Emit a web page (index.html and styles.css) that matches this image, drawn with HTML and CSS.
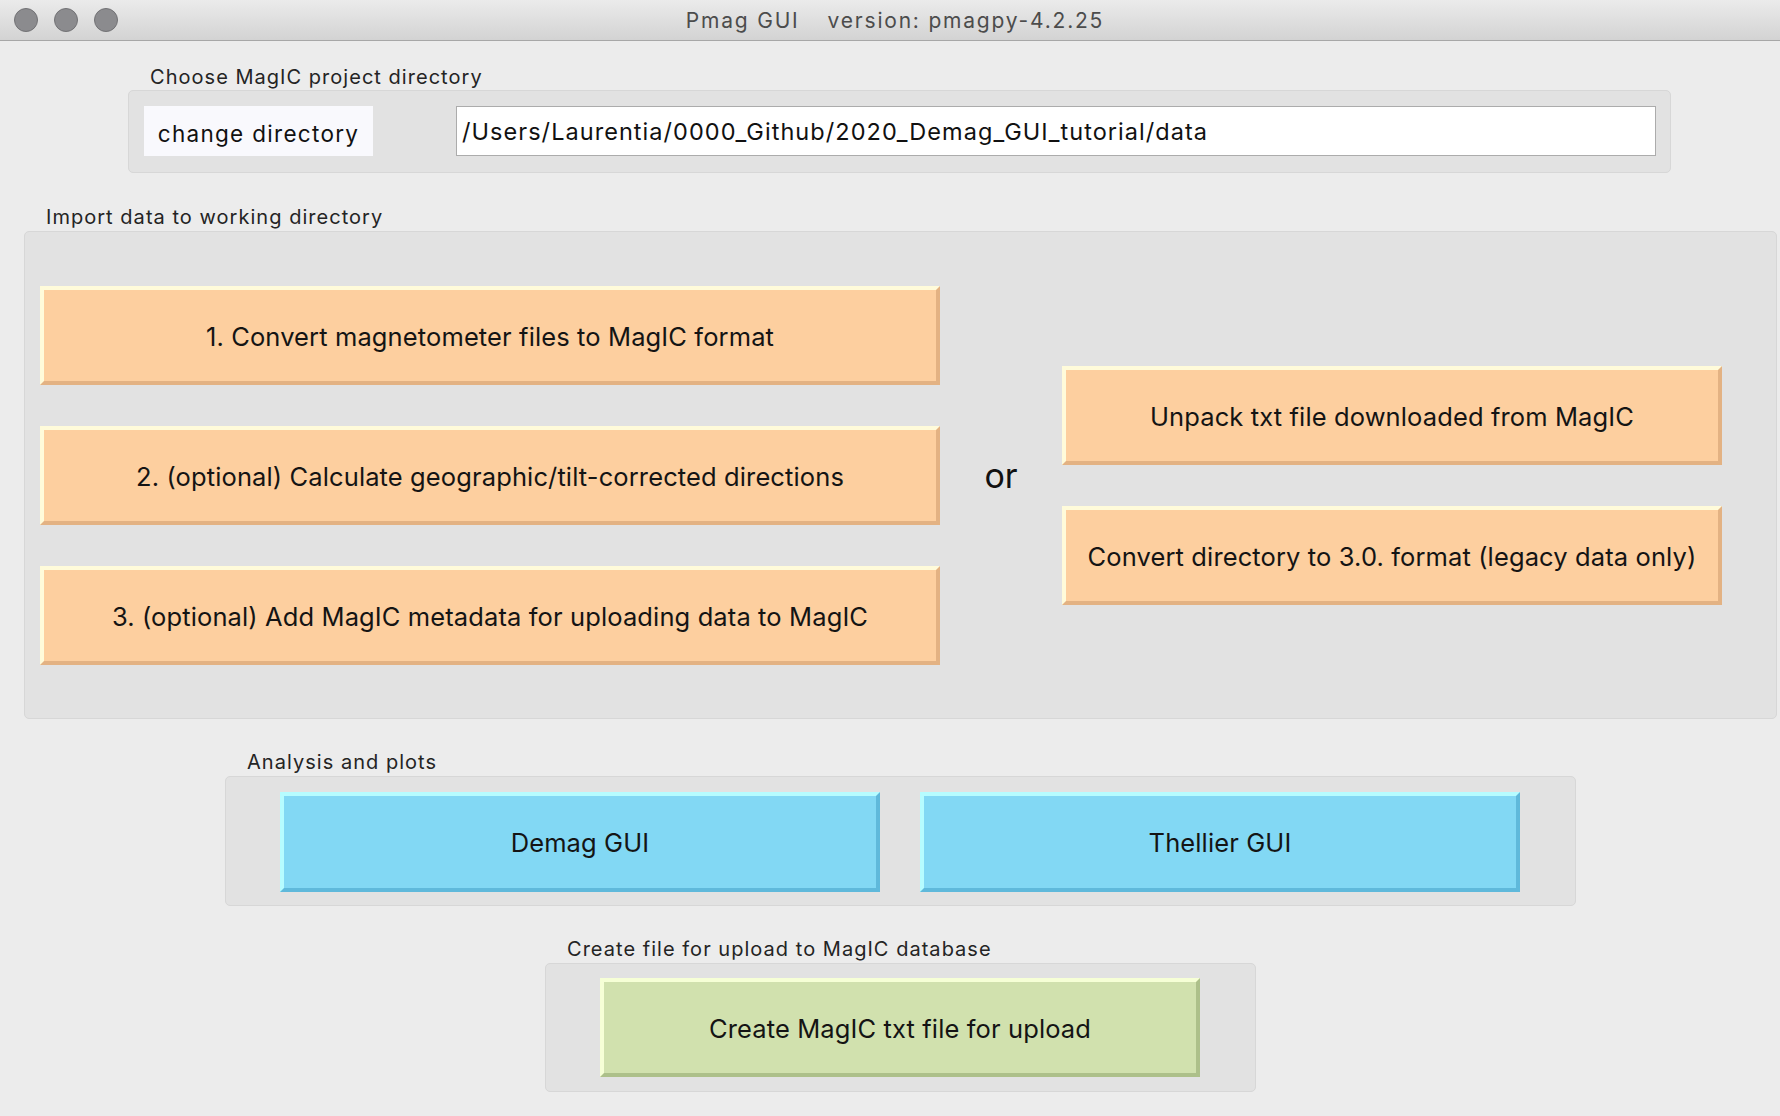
FILE: index.html
```html
<!DOCTYPE html>
<html>
<head>
<meta charset="utf-8">
<title>Pmag GUI</title>
<link rel="stylesheet" href="styles.css">
</head>
<body>
<div class="window">
  <div class="titlebar">
    <div class="lights">
      <span class="light"></span><span class="light"></span><span class="light"></span>
    </div>
    <div class="title">Pmag GUI<span class="ver">version: pmagpy-4.2.25</span></div>
    <div></div>
  </div>

  <section class="group g-dir">
    <div class="label">Choose MagIC project directory</div>
    <div class="box box-dir">
      <div class="btn-plain">change directory</div>
      <div class="path">/Users/Laurentia/0000_Github/2020_Demag_GUI_tutorial/data</div>
    </div>
  </section>

  <section class="group g-import">
    <div class="label">Import data to working directory</div>
    <div class="box box-import">
      <div class="col col-left">
        <div class="btn orange">1. Convert magnetometer files to MagIC format</div>
        <div class="btn orange">2. (optional) Calculate geographic/tilt-corrected directions</div>
        <div class="btn orange">3. (optional) Add MagIC metadata for uploading data to MagIC</div>
      </div>
      <div class="or">or</div>
      <div class="col col-right">
        <div class="btn orange">Unpack txt file downloaded from MagIC</div>
        <div class="btn orange">Convert directory to 3.0. format (legacy data only)</div>
      </div>
    </div>
  </section>

  <section class="group g-analysis">
    <div class="label">Analysis and plots</div>
    <div class="box box-analysis">
      <div class="btn blue">Demag GUI</div>
      <div class="btn blue">Thellier GUI</div>
    </div>
  </section>

  <section class="group g-upload">
    <div class="label">Create file for upload to MagIC database</div>
    <div class="box box-upload">
      <div class="btn green">Create MagIC txt file for upload</div>
    </div>
  </section>
</div>
</body>
</html>
```

FILE: styles.css
```css
* { box-sizing: border-box; }

html, body {
  margin: 0;
  padding: 0;
}

body {
  width: 1780px;
  height: 1116px;
  overflow: hidden;
  background: #ececec;
  font-family: "Inter", "Liberation Sans", sans-serif;
  color: #1a1a1a;
}

.window {
  display: flex;
  flex-direction: column;
  align-items: flex-start;
  width: 1780px;
  height: 1116px;
}

/* ---------- title bar ---------- */
.titlebar {
  width: 100%;
  height: 41px;
  flex: none;
  display: grid;
  grid-template-columns: 1fr auto 1fr;
  align-items: center;
  background: linear-gradient(#ebebeb, #d3d3d3);
  border-bottom: 1px solid #a7a7a7;
}

.lights {
  display: flex;
  gap: 16px;
  padding-left: 14px;
}

.light {
  width: 24px;
  height: 24px;
  border-radius: 50%;
  background: #8b8b8e;
  border: 1px solid #727275;
}

.title {
  font-size: 21px;
  color: #4c4c4c;
  letter-spacing: 1.8px;
  padding-left: 10px;
}

.ver {
  margin-left: 28px;
}

/* ---------- groups ---------- */
.group {
  display: flex;
  flex-direction: column;
  flex: none;
}

.label {
  font-size: 20px;
  line-height: 24px;
  height: 24px;
  margin-left: 22px;
  margin-bottom: 2px;
  color: #242424;
  letter-spacing: 1.03px;
}

.box {
  background: #e2e2e2;
  border: 1px solid #d7d7d7;
  border-radius: 5px;
  display: flex;
}

.g-dir { margin: 23px 0 0 128px; }
.g-dir .label { margin-top: 1px; margin-bottom: 1px; }
.g-import { margin: 32px 0 0 24px; }
.g-analysis { margin: 31px 0 0 225px; }
.g-upload { margin: 31px 0 0 545px; }

/* directory box */
.box-dir {
  width: 1543px;
  height: 83px;
  padding: 15px 14px 16px 15px;
  align-items: stretch;
}

.btn-plain {
  width: 229px;
  height: 50px;
  padding-top: 4px;
  background: #f9f9fd;
  display: flex;
  align-items: center;
  justify-content: center;
  font-size: 22.5px;
  color: #111;
  letter-spacing: 1.3px;
}

.path {
  width: 1200px;
  height: 50px;
  margin-left: 83px;
  background: #ffffff;
  border: 1px solid #acacac;
  display: flex;
  align-items: center;
  padding-left: 5px;
  font-size: 23.5px;
  letter-spacing: 1.05px;
  color: #111;
}

/* import box */
.box-import {
  width: 1753px;
  height: 488px;
  padding: 54px 54px 53px 15px;
  align-items: flex-start;
}

.col {
  display: flex;
  flex-direction: column;
  gap: 41px;
}

.col-left { width: 900px; }
.col-right { width: 660px; margin-top: 80px; }

.or {
  width: 122px;
  align-self: center;
  text-align: center;
  font-size: 34px;
  line-height: 40px;
  color: #111;
}

/* buttons */
.btn {
  height: 99px;
  display: flex;
  align-items: center;
  justify-content: center;
  font-size: 25.5px;
  color: #141414;
  border-style: solid;
  border-width: 4px;
  letter-spacing: 0.12px;
  padding-top: 1px;
}

.orange {
  background: #fdcf9f;
  border-color: #fffbda #e3b283 #e3b283 #fffbda;
}

.blue {
  background: #82d8f4;
  border-color: #b6fcff #5fb9db #5fb9db #b6fcff;
}

.green {
  background: #d1e1ae;
  border-color: #f6ffd6 #adc08a #adc08a #f6ffd6;
}

/* analysis box */
.box-analysis {
  width: 1351px;
  height: 130px;
  padding: 15px 55px 13px 54px;
  gap: 40px;
}

.box-analysis .btn {
  width: 600px;
  height: 100px;
}

/* upload box */
.box-upload {
  width: 711px;
  height: 129px;
  padding: 14px 55px 14px 54px;
}

.box-upload .btn {
  width: 600px;
  height: 99px;
}
```
